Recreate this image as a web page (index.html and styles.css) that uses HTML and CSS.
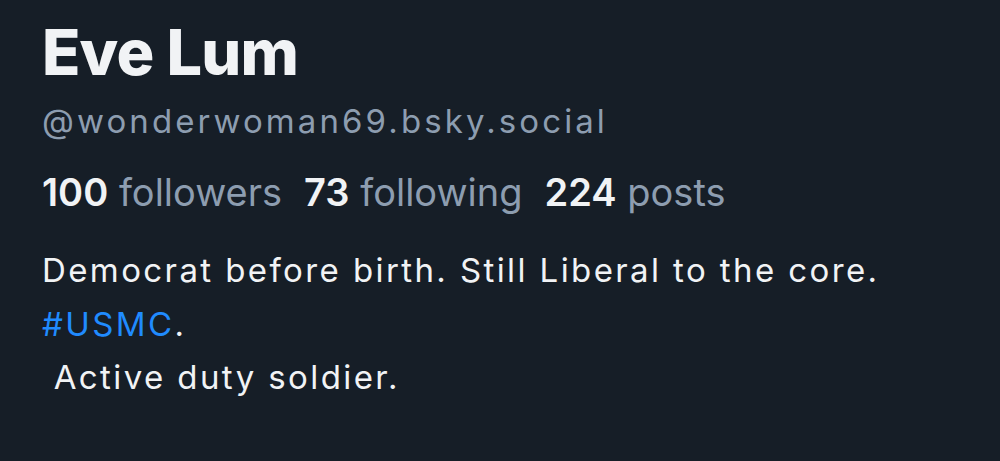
FILE: index.html
```html
<!DOCTYPE html>
<html lang="en">
<head>
<meta charset="utf-8">
<title>Eve Lum</title>
<link rel="stylesheet" href="styles.css">
</head>
<body>
<main class="profile">
  <h1 class="name">Eve Lum</h1>
  <div class="handle">@wonderwoman69.bsky.social</div>
  <div class="stats">
    <span class="stat"><b>100</b> followers</span>
    <span class="stat"><b>73</b> following</span>
    <span class="stat"><b>224</b> posts</span>
  </div>
  <p class="bio">Democrat before birth. Still Liberal to the core.
<a class="tag" href="#">#USMC</a>.
 Active duty soldier.</p>
</main>
</body>
</html>
```
FILE: styles.css
```css
html, body {
  margin: 0;
  padding: 0;
  background: #161e27;
}
body {
  font-family: Inter, "Noto Sans", sans-serif;
  color: #f1f3f5;
  width: 1000px;
  height: 461px;
  overflow: hidden;
}
.profile {
  padding: 16px 42px 0 42px;
  display: flex;
  flex-direction: column;
  align-items: flex-start;
}
.name {
  margin: 0;
  font-size: 63px;
  font-weight: 800;
  line-height: 72px;
  letter-spacing: -0.8px;
}
.handle {
  margin-top: 13px;
  font-size: 33px;
  line-height: 40px;
  letter-spacing: 3.1px;
  color: #8d9db0;
}
.stats {
  margin-top: 28px;
  display: flex;
  gap: 22px;
  font-size: 38px;
  line-height: 46px;
  letter-spacing: 0;
  color: #8d9db0;
}
.stats b {
  color: #f1f3f5;
  font-weight: 600;
}
.bio {
  margin: 29px 0 0 0;
  font-size: 33px;
  line-height: 53.5px;
  letter-spacing: 2.4px;
  white-space: pre-wrap;
  color: #f1f3f5;
}
.tag {
  color: #208bfe;
  text-decoration: none;
}
```
